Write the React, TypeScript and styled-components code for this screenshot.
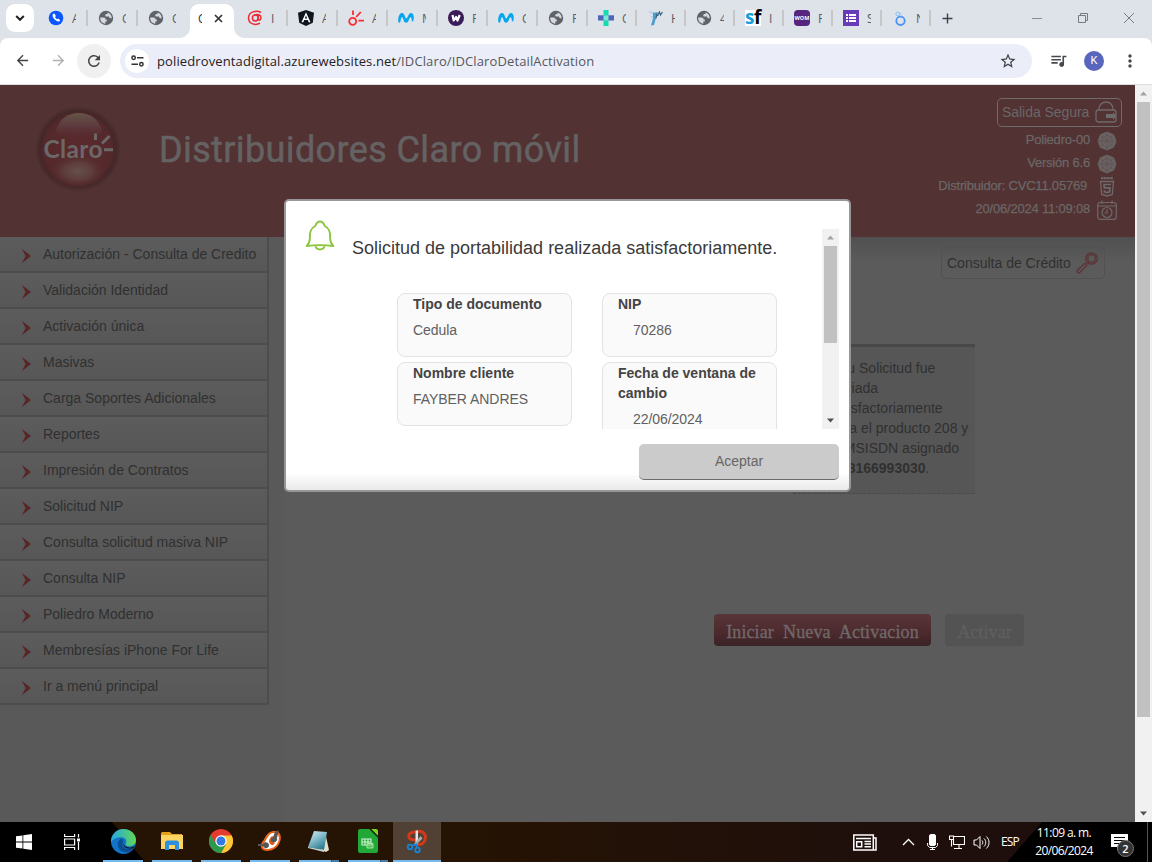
import React from "react";
import styled, { createGlobalStyle } from "styled-components";
import {
  MdQueueMusic,
  MdStarBorder,
  MdMoreVert,
  MdRefresh,
  MdArrowBack,
  MdArrowForward,
  MdAdd,
} from "react-icons/md";

const Global = createGlobalStyle`
  *, *::before, *::after { box-sizing: border-box; }
  body { margin: 0; background: #5b5b5b; font-family: "Liberation Sans", Arial, sans-serif; }
  svg { display: block; flex: none; }
`;

const uiFont = `"Open Sans", "Noto Sans", sans-serif`;

const Screen = styled.div`
  width: 1152px;
  height: 862px;
  display: flex;
  flex-direction: column;
  overflow: hidden;
`;

/* ---------- browser chrome ---------- */

const TabStrip = styled.div`
  height: 38px;
  flex: none;
  display: flex;
  background: #dee2e9;
  font: 12px ${uiFont};
  color: #5b5d60;
`;
const TabSearch = styled.button`
  width: 28px;
  height: 28px;
  margin: 4px 4px 0 6px;
  padding: 0;
  border: 0;
  border-radius: 9px;
  background: #fff;
  display: grid;
  place-items: center;
`;
const Tab = styled.div<{ $w: number; $bar?: boolean }>`
  width: ${(p) => p.$w}px;
  flex: none;
  height: 16px;
  margin-top: 10px;
  padding-left: 10px;
  display: flex;
  align-items: center;
  gap: 8px;
  border-right: 2px solid ${(p) => (p.$bar === false ? "transparent" : "#c7c7c7")};
`;
const TabLabel = styled.span`
  width: 4px;
  overflow: hidden;
  white-space: nowrap;
`;
const ActiveTab = styled.div`
  position: relative;
  width: 44px;
  height: 34px;
  margin: 4px 3px 0 2px;
  padding: 0 0 6px 8px;
  flex: none;
  display: flex;
  align-items: center;
  gap: 12px;
  color: #333;
  background: #fff;
  border-radius: 9px 9px 0 0;
  &::before,
  &::after {
    content: "";
    position: absolute;
    bottom: 0;
    width: 10px;
    height: 10px;
  }
  &::before {
    left: -10px;
    background: radial-gradient(circle at 0 0, transparent 9.5px, #fff 10px);
  }
  &::after {
    right: -10px;
    background: radial-gradient(circle at 100% 0, transparent 9.5px, #fff 10px);
  }
`;
const NewTab = styled.div`
  width: 34px;
  height: 36px;
  display: grid;
  place-items: center;
  color: #3c4043;
  margin-left: -1px;
`;
const WindowButtons = styled.div`
  margin-left: auto;
  height: 36px;
  display: flex;
  align-items: center;
  gap: 34px;
  padding-right: 17px;
`;

const ToolbarWrap = styled.div`
  height: 47px;
  flex: none;
  background: #dee2e9;
`;
const Toolbar = styled.div`
  height: 47px;
  display: flex;
  align-items: center;
  padding: 0 12px 1px 11px;
  background: #fff;
  border-bottom: 1px solid #dcdde0;
  border-radius: 8px 8px 0 0;
  color: #45484c;
`;
const NavIcon = styled.div<{ $round?: boolean; $dim?: boolean; $mr: number }>`
  width: ${(p) => (p.$round ? 34 : 22)}px;
  height: ${(p) => (p.$round ? 34 : 22)}px;
  margin-right: ${(p) => p.$mr}px;
  display: grid;
  place-items: center;
  border-radius: 50%;
  background: ${(p) => (p.$round ? "#f0f0f0" : "transparent")};
  color: ${(p) => (p.$dim ? "#b0b1b3" : "#444")};
`;
const AddressBar = styled.div`
  width: 912px;
  height: 34px;
  margin-right: 17px;
  border-radius: 17px;
  background: #ebeef8;
  display: flex;
  align-items: center;
  padding: 0 15px 0 5px;
  font: 13px/34px ${uiFont};
  color: #55585c;
  b {
    font-weight: 400;
    color: #1f2023;
  }
`;
const SiteInfo = styled.div`
  width: 24px;
  height: 24px;
  border-radius: 50%;
  background: #fff;
  display: grid;
  place-items: center;
  margin-right: 8px;
`;
const Url = styled.span`
  flex: 1;
  white-space: nowrap;
  letter-spacing: 0.12px;
`;
const Avatar = styled.div`
  width: 20px;
  height: 20px;
  margin: 0 16px 0 16px;
  border-radius: 50%;
  background: #5866bd;
  color: #fff;
  font: 11px/20px Roboto, sans-serif;
  text-align: center;
`;

/* ---------- web page ---------- */

const Viewport = styled.div`
  position: relative;
  flex: 1;
  min-height: 0;
  display: flex;
`;
const Page = styled.div`
  width: 1135px;
  display: flex;
  flex-direction: column;
  background: #5b5b5b;
`;
const Header = styled.header`
  height: 152px;
  flex: none;
  display: flex;
  background: #533233;
  padding: 13px 13px 0 34px;
`;
const SiteTitle = styled.h1`
  margin: 27px 0 0 37px;
  font: 400 36px/50px Roboto, sans-serif;
  letter-spacing: 0.38px;
  -webkit-text-stroke: 0.5px #646262;
  white-space: nowrap;
  color: #646262;
`;
const Session = styled.div`
  margin-left: auto;
  display: flex;
  flex-direction: column;
  align-items: flex-end;
  color: #6a6767;
`;
const ExitButton = styled.button`
  width: 125px;
  height: 29px;
  margin-bottom: 2px;
  padding: 0 4px 2px 4px;
  display: flex;
  align-items: center;
  justify-content: space-between;
  border: 1px solid #706a6a;
  border-radius: 5px;
  background: none;
  color: inherit;
  font: 14px "Liberation Sans", Arial, sans-serif;
  letter-spacing: -0.05px;
  white-space: nowrap;
  svg {
    margin-top: 1px;
  }
`;
const SessionRow = styled.div<{ $gap?: number }>`
  height: 23px;
  display: flex;
  align-items: center;
  gap: ${(p) => p.$gap ?? 7}px;
  padding-right: 5px;
  font-size: 13px;
  letter-spacing: -0.2px;
  -webkit-text-stroke: 0.25px #6a6767;
  span {
    margin-top: -2px;
  }
  svg {
    margin-top: 1px;
  }
`;
const Body = styled.div`
  flex: 1;
  display: flex;
  background: linear-gradient(#505050, #5b5b5b 26px);
`;
const Side = styled.nav`
  width: 284px;
  background: #595959;
`;
const Menu = styled.ul`
  width: 269px;
  margin: 0;
  padding: 0;
  list-style: none;
  border-right: 2px solid #4d4d4d;
`;
const MenuItem = styled.li`
  height: 36px;
  padding: 0 0 0 22px;
  display: flex;
  gap: 12px;
  font-size: 14px;
  line-height: 34px;
  white-space: nowrap;
  color: #303030;
  background: linear-gradient(#5c5c5c, #575757);
  border-bottom: 2px solid #4d4d4d;
  svg {
    margin-top: 12px;
  }
`;
const Main = styled.main`
  flex: 1;
  display: flex;
  flex-direction: column;
  align-items: flex-end;
  padding: 10px 30px 0 0;
`;
const CreditButton = styled.button`
  width: 164px;
  height: 32px;
  padding: 0 6px 0 5px;
  display: flex;
  align-items: center;
  justify-content: space-between;
  border: 1px solid #515151;
  border-radius: 5px;
  background: none;
  font: 14px "Liberation Sans", Arial, sans-serif;
  color: #303030;
  white-space: nowrap;
`;
const ResultBox = styled.section`
  width: 182px;
  height: 150px;
  margin: 65px 130px 0 0;
  padding: 11px 0 0 36px;
  border-top: 3px solid #484848;
  border-bottom: 1px dashed #4b4b4b;
  background: #565656;
  font-size: 14px;
  line-height: 20px;
  white-space: nowrap;
  color: #303030;
`;
const Line = styled.div<{ $indent?: number }>`
  padding-left: ${(p) => p.$indent ?? 0}px;
`;
const Actions = styled.div`
  display: flex;
  gap: 14px;
  margin: 120px 81px 0 0;
`;
const ActionButton = styled.button<{ $w: number; $off?: boolean }>`
  width: ${(p) => p.$w}px;
  height: 32px;
  padding: 5px 0 0;
  border: 0;
  border-radius: 4px;
  white-space: pre;
  font: 18px "Liberation Serif", "Times New Roman", serif;
  letter-spacing: 0.1px;
  -webkit-text-stroke: 0.3px;
  color: ${(p) => (p.$off ? "#5f5f5f" : "#6f6969")};
  background: ${(p) => (p.$off ? "#535353" : "linear-gradient(#573538, #4c292d 60%, #382325)")};
`;

/* ---------- scrollbars ---------- */

const Track = styled.div`
  width: 17px;
  flex: none;
  display: flex;
  flex-direction: column;
  align-items: center;
  background: #f1f1f1;
`;
const ArrowCell = styled.div`
  height: 17px;
  width: 17px;
  display: grid;
  place-items: center;
`;
const Thumb = styled.div<{ $h: number }>`
  width: 13px;
  height: ${(p) => p.$h}px;
  margin-bottom: auto;
  background: #c1c1c1;
`;

/* ---------- dialog ---------- */

const Dialog = styled.div`
  position: absolute;
  left: 284px;
  top: 114px;
  width: 567px;
  height: 293px;
  padding: 19px 10px 0 19px;
  border: 2px solid #979797;
  border-radius: 5px;
  background: linear-gradient(#fff 272px, #eaeaea 289px);
  display: flex;
  flex-direction: column;
`;
const DialogBody = styled.div`
  display: flex;
  height: 209px;
`;
const ScrollArea = styled.div`
  flex: 1;
  height: 200px;
  margin-top: 9px;
  margin-left: 17px;
  display: flex;
  justify-content: space-between;
  overflow: hidden;
`;
const Content = styled.div`
  width: 440px;
`;
const DialogTitle = styled.h2`
  margin: 9px 0 34px;
  font-size: 18px;
  font-weight: 400;
  line-height: 21px;
  white-space: nowrap;
  color: #3b3b3b;
`;
const Cards = styled.div`
  display: grid;
  grid-template-columns: 175px 175px;
  gap: 5px 30px;
  align-items: start;
  padding-left: 45px;
`;
const Card = styled.div`
  min-height: 64px;
  padding: 0 15px 10px;
  border: 1px solid #e3e3e3;
  border-radius: 8px;
  background: #fafafa;
  font-size: 14px;
  line-height: 20px;
  color: #606060;
`;
const CardLabel = styled.div`
  font-weight: 700;
  color: #444;
  white-space: pre-line;
`;
const CardValue = styled.div<{ $indent?: boolean }>`
  margin-top: 6px;
  padding-left: ${(p) => (p.$indent ? 15 : 0)}px;
  white-space: nowrap;
  letter-spacing: -0.05px;
`;
const AcceptButton = styled.button`
  align-self: flex-end;
  width: 200px;
  height: 36px;
  margin-top: 15px;
  padding: 0 0 2px;
  border: 0;
  border-bottom: 1px solid #6b6b6b;
  border-radius: 5px;
  background: #cbcbcb;
  font: 14px "Liberation Sans", Arial, sans-serif;
  color: #666;
`;

/* ---------- taskbar ---------- */

const Taskbar = styled.footer`
  position: relative;
  height: 40px;
  flex: none;
  display: flex;
  background: #000;
  color: #fff;
  &::before {
    content: "";
    position: absolute;
    inset: 0;
    background: linear-gradient(90deg, #251303, #251303 450px, #1f0f0c 900px);
    clip-path: polygon(112px 0, 1042px 0, 1007px 100%, 145px 100%);
  }
  > * {
    position: relative;
  }
`;
const SysButton = styled.div`
  width: 48px;
  display: grid;
  place-items: center;
`;
const Apps = styled.div`
  display: flex;
  gap: 9px;
  margin-left: 7px;
`;
const AppButton = styled.div<{ $stacked?: boolean }>`
  width: 40px;
  display: grid;
  place-items: center;
  border-bottom: 2px solid #76b9ed;
  border-image: ${(p) =>
    p.$stacked ? "linear-gradient(90deg, #76b9ed 31px, #30506b 31px, #4d7ba0 32px) 2" : "none"};
`;
const ActiveApp = styled.div`
  width: 48px;
  margin-left: -4px;
  display: grid;
  place-items: center;
  background: #504134;
  border-bottom: 2px solid #76b9ed;
`;
const Tray = styled.div`
  margin-left: auto;
  display: flex;
  align-items: center;
  font: 12px/18px ${uiFont};
  white-space: nowrap;
`;
const TrayItem = styled.div<{ $mr: number }>`
  margin-right: ${(p) => p.$mr}px;
`;
const Lang = styled.div`
  width: 20px;
  letter-spacing: -0.9px;
`;
const Clock = styled.div`
  width: 60px;
  margin: 0 17px 0 13px;
  text-align: center;
  letter-spacing: -0.6px;
`;
const Notice = styled.div`
  position: relative;
  width: 24px;
  height: 20px;
`;
const Count = styled.span`
  position: absolute;
  left: 6px;
  top: 8px;
  width: 17px;
  height: 17px;
  border: 1px solid #777;
  border-radius: 50%;
  background: #333;
  font: 600 11px/15px ${uiFont};
  text-align: center;
`;
const ShowDesktop = styled.div`
  height: 40px;
  margin-left: 12px;
  width: 5px;
  border-left: 1px solid #555;
`;

/* ---------- drawings ---------- */

const CaretDown = () => (
  <svg width="10" height="8" viewBox="0 0 10 8" fill="none" stroke="#202124" strokeWidth="2">
    <path d="M1.200 2L5 5.800 8.800 2" />
  </svg>
);
const CloseTab = () => (
  <svg width="9" height="9" viewBox="0 0 9 9" stroke="#333" strokeWidth="1.700">
    <path d="M1 1l7 7M8 1L1 8" />
  </svg>
);
const Globe = () => (
  <svg width="16" height="16" viewBox="0 0 16 16">
    <circle cx="8" cy="8" r="7.200" fill="#5f6368" />
    <path
      d="M2.200 7.600h3.300c1.700 0 2 .7 2 1.900h1.300v1.900H7.300v2.300C4 13.500 1.900 10.800 2.200 7.600zM9.600 2.400c2.600.8 4.300 3 4.100 5.900h-1.300c-1 0-1.300-.7-1.300-1.700H8.300c-1.200 0-1.500-2.500 0-2.700h1.300z"
      fill="#d5d9df"
    />
  </svg>
);
const Phone = () => (
  <svg width="16" height="16" viewBox="0 0 16 16">
    <circle cx="8" cy="8" r="7.300" fill="#0b57ff" />
    <path d="M5.200 3.700c-1 1-.9 3 1 5.300 1.900 2.100 4 3 5.300 2.200l.7-.8-1.900-1.900-1 .7c-.9-.3-1.900-1.400-2.200-2.300l.8-.9-1.500-2.500z" fill="#fff" />
  </svg>
);
const ClaroAt = () => (
  <svg width="16" height="16" viewBox="0 0 16 16" fill="none" stroke="#ea2b38" strokeWidth="1.500">
    <path d="M14 2.500C10 0 1.500 1.500 1.500 8S9 15.500 13 13.200" />
    <circle cx="8.300" cy="8" r="2.900" />
    <path d="M11.300 5v4.300c.5 1.500 2.700.8 2.700-1.600 0-3-3.500-4-6.500-2.700" />
  </svg>
);
const Angular = () => (
  <svg width="16" height="16" viewBox="0 0 16 16">
    <path d="M8 0l8 2.700-1.200 10L8 16l-6.800-3.300L0 2.700z" fill="#0e1720" />
    <path d="M8 2.300L3.500 12.300h1.800l.9-2.200h3.600l.9 2.200h1.800zM8 5.500l1.200 3.100H6.800z" fill="#fff" fillRule="evenodd" />
  </svg>
);
const ClaroMark = () => (
  <svg width="16" height="16" viewBox="0 0 16 16" fill="none" stroke="#fb2b30" strokeWidth="1.800">
    <circle cx="4.700" cy="11.300" r="3.500" />
    <path d="M5 .5v4.500M8.200 7l4.600-5M10.500 10.700H16" />
  </svg>
);
const Movistar = () => (
  <svg width="16" height="16" viewBox="0 0 16 16">
    <path d="M.2 10.500C.3 5.500 2 3 4 3c2.700 0 3 5.500 4.300 5.500S10.500 3 13 3c1.800 0 2.700 1.800 2.800 4.500 0 2.500-.6 4-1.200 4-1.200 0-.5-4.300-2-4.300-1.700 0-1.500 5.500-4.500 5.500C5.300 12.700 5.500 7.200 4 7.200c-1.500 0-1 5.500-2.500 5.500-.8 0-1.300-.7-1.300-2.200z" fill="#05a6ee" />
  </svg>
);
const WomRound = () => (
  <svg width="16" height="16" viewBox="0 0 16 16">
    <circle cx="8" cy="8" r="8" fill="#3a1d57" />
    <path d="M4.500 5l1.200 5.500L8 7l1.500 3.500L11.700 5" fill="none" stroke="#fff" strokeWidth="2.200" strokeLinejoin="round" />
  </svg>
);
const Cross = () => (
  <svg width="16" height="16" viewBox="0 0 16 16">
    <path d="M5.500 0h5v16h-5z" fill="#14dcae" />
    <path d="M0 5.300h16v5.200H0z" fill="#4d66b5" />
    <path d="M5.500 5.300h5v5.200h-5z" fill="#79ead6" />
  </svg>
);
const BlueFigure = () => (
  <svg width="16" height="16" viewBox="0 0 16 16">
    <path d="M1 1l7 1-1 3-4-2zM2 5l5 2-1 2z" fill="#b3d4e5" />
    <path d="M6 3l5-1-2 6-2 7-3 .5 2-7z" fill="#4e9dcb" />
    <path d="M10.500 6l2-4 1 3 2-3M10 3.500l-1 5" fill="none" stroke="#35617f" strokeWidth="1.200" />
  </svg>
);
const SfBox = styled.span`
  width: 16px;
  height: 16px;
  background: #fff;
  color: #000;
  font: 700 19px/15px "Open Sans", sans-serif;
  letter-spacing: -0.5px;
  white-space: nowrap;
  i {
    font-style: normal;
    color: #129fdc;
  }
`;
const WomSquare = styled.span`
  width: 16px;
  height: 16px;
  border-radius: 4px;
  background: #56257e;
  color: #fff;
  font: 700 5.500px/16px "Open Sans", sans-serif;
  text-align: center;
`;
const FormIcon = () => (
  <svg width="16" height="16" viewBox="0 0 16 16">
    <path d="M0 0h16v16H0z" fill="#673ab7" />
    <path d="M3 4h2v2H3zM6 4h7v2H6zM3 7h2v2H3zM6 7h7v2H6zM3 10h2v2H3zM6 10h7v2H6z" fill="#fff" />
  </svg>
);
const Rings = () => (
  <svg width="16" height="16" viewBox="0 0 16 16" fill="none" stroke="#4b92f5">
    <circle cx="8.500" cy="10.800" r="4.200" strokeWidth="1.800" />
    <circle cx="5.800" cy="4" r="1.900" stroke="#89bdf8" />
    <path d="M7.500 2.300c1.500.5 2 2 1.500 4" stroke="#a9d0fa" />
  </svg>
);

const Arrow = ({ up, dim }: { up?: boolean; dim?: boolean }) => (
  <svg width="7" height="5" viewBox="0 0 7 5">
    <path d={up ? "M0 4.500L3.500 .5 7 4.500z" : "M0 .5L3.500 4.500 7 .5z"} fill={dim ? "#a3a3a3" : "#505050"} />
  </svg>
);

const LogoSvg = styled.svg`
  margin-top: 7px;
`;
const ClaroLogo = () => (
  <LogoSvg width="88" height="88" viewBox="0 0 88 88">
    <defs>
      <radialGradient id="halo">
        <stop offset=".88" stopColor="#432829" />
        <stop offset="1" stopColor="#533233" />
      </radialGradient>
      <radialGradient id="ball">
        <stop offset="0" stopColor="#59292d" />
        <stop offset=".85" stopColor="#55292c" />
        <stop offset="1" stopColor="#452628" />
      </radialGradient>
      <linearGradient id="shine" x2="0" y2="1">
        <stop offset="0" stopColor="#655448" />
        <stop offset=".45" stopColor="#5d3b3e" />
        <stop offset="1" stopColor="#5a292d" stopOpacity="0" />
      </linearGradient>
      <radialGradient id="glow">
        <stop offset="0" stopColor="#65504c" />
        <stop offset=".5" stopColor="#5e3d3b" />
        <stop offset="1" stopColor="#562b2c" stopOpacity="0" />
      </radialGradient>
    </defs>
    <circle cx="44" cy="44" r="43" fill="url(#halo)" />
    <circle cx="44" cy="44" r="38.500" fill="url(#ball)" />
    <path d="M22 26C25 14 34 8 45 8s20 6 23 18c-3 6-11 10-23 10s-20-4-23-10z" fill="url(#shine)" />
    <ellipse cx="44" cy="66" rx="28" ry="17" fill="url(#glow)" />
    <text x="9.500" y="52.500" fontFamily="Lato, sans-serif" fontWeight="700" fontSize="24.500" textLength="59" fill="#6c6868">
      Claro
    </text>
    <path d="M61.500 28.500v6.500M68 38.500l7.500-7.500M70 44.700h9" stroke="#6c6868" strokeWidth="3" />
  </LogoSvg>
);
const Lock = () => (
  <svg width="22" height="22" viewBox="0 0 22 22" fill="none" stroke="#6f6a6a" strokeWidth="1.300">
    <rect x="1" y="9" width="20" height="12" rx="2.500" />
    <path d="M4 9V8a7 7 0 0 1 14 0v1" />
    <path d="M11 13h7v-2l3.500 4-3.500 4v-2h-7z" fill="#6f6a6a" stroke="none" />
  </svg>
);
const Poly = () => (
  <svg width="20" height="20" viewBox="0 0 20 20">
    <path d="M10 .5l7 3 2.500 6.500L17 16.500l-7 3-7-3L.5 10 3 3.500z" fill="#696363" />
    <path d="M10 .5v19M.5 10h19M3 3.500l14 13M17 3.500l-14 13M5 7l5-3 5 3v6l-5 4-5-4z" stroke="#5e4d4d" strokeWidth=".6" fill="none" />
  </svg>
);
const Html5 = () => (
  <svg width="20" height="20" viewBox="0 0 20 20" fill="none" stroke="#6f6868">
    <path d="M4 1.200h12" strokeWidth="2.200" strokeDasharray="2.500 .6" />
    <path d="M3.500 4.500h13l-1.200 13L10 19l-5.300-1.500z" strokeWidth="1.300" />
    <path d="M14 7.500H7l.3 3.300h5.700l-.4 4-2.600.8-2.600-.8-.1-1.500" strokeWidth="1.700" />
  </svg>
);
const CalendarClock = () => (
  <svg width="20" height="20" viewBox="0 0 20 20" fill="none" stroke="#6f6868" strokeWidth="1.200">
    <rect x=".7" y="2.500" width="18.600" height="16.800" rx="2.500" />
    <path d="M1 6h18M5 .5V4M15 .5V4" />
    <circle cx="10" cy="12.500" r="5" />
    <path d="M10 9.500v3.500H7.700" />
  </svg>
);
const Magnifier = () => (
  <svg width="22" height="22" viewBox="0 0 22 22" fill="none" stroke="#5c3236" strokeWidth="1.300">
    <circle cx="15.500" cy="6.500" r="5.700" />
    <circle cx="15.500" cy="6.500" r="3.800" />
    <path d="M9 11.200l2 2-7.500 7.500c-1.400.8-3-.7-2.200-2.200zM11 11.500l1-1" />
  </svg>
);
const Chevron = () => (
  <svg width="9" height="14" viewBox="0 0 9 14">
    <path d="M0 0l9 7-9 7 3.500-7z" fill="#5a2526" />
  </svg>
);
const Bell = () => (
  <svg width="30" height="31" viewBox="0 0 30 31" fill="none" stroke="#8cc63f" strokeWidth="1.900" strokeLinejoin="round">
    <path d="M1.700 26c2.500-2.500 3.200-4.500 3.200-8-.8-6.500 1.500-10 5.500-12.300C11.300 3 12.500 1.500 15 1.500s3.700 1.500 4.600 4.200c4 2.300 6.300 5.800 5.500 12.300 0 3.500.7 5.500 3.200 8-8-1-18.600-1-26.600 0z" />
    <path d="M10.500 26.200c.7 4.300 8.300 4.300 9 0" />
  </svg>
);

const WindowsIcon = () => (
  <svg width="16" height="16" viewBox="0 0 16 16" fill="#fff">
    <path d="M0 2.300L6.500 1.400v6.200H0zM7.300 1.300L16 0v7.600H7.300zM0 8.400h6.500v6.200L0 13.700zM7.300 8.400H16V16l-8.700-1.300z" />
  </svg>
);
const TaskView = () => (
  <svg width="16" height="16" viewBox="0 0 16 16" fill="none" stroke="#fff" strokeWidth="1.200">
    <path d="M.6 0v2.500h10V0M.6 16v-2.500h10V16M.6 5h10v6H.6zM14.500 0v3.500M14.500 8v8" />
    <path d="M13 4.500h3v3h-3z" fill="#fff" stroke="none" />
  </svg>
);
const Edge = () => (
  <svg width="25" height="25" viewBox="0 0 24 24">
    <defs>
      <linearGradient id="edgeTop">
        <stop offset="0" stopColor="#27a9e1" />
        <stop offset="1" stopColor="#5fd655" />
      </linearGradient>
    </defs>
    <circle cx="12" cy="12" r="12" fill="#1174ca" />
    <path d="M0 11C1 4 6 0 12 0c7 0 12 5 12 10.500 0 4-3 6-6.500 6-3 0-4-1.200-3.500-2 1.800-2.500.5-6.500-4-6.500C5 8 1.500 10 0 13z" fill="url(#edgeTop)" />
    <path d="M9 9.500c-4 3-3.500 11 4 12.800 4 .5 7-1 9-4.300-4 2-8 1.500-10-1-1.500-2-1.500-4 0-6-1-1.500-2-1.800-3-1.500z" fill="#0c4d92" />
    <path d="M12.500 11c-1.500 3 .5 6.500 4.500 6.800 2.500.2 4.500-.6 6-2-1 3-2.500 3-5 3-4.500.3-7.500-3-5.500-7.800z" fill="#120d0a" />
  </svg>
);
const Folder = () => (
  <svg width="22" height="20" viewBox="0 0 22 20">
    <path d="M0 2l1-1h8l2 2h10v6H0z" fill="#e2a01b" />
    <path d="M0 4h22v14H0z" fill="#fcd462" />
    <path d="M4 19v-8l2-1.500h10l2 1.500v8h-4v-5H8v5z" fill="#2d8fdd" />
  </svg>
);
const Chrome = () => (
  <svg width="24" height="24" viewBox="0 0 24 24">
    <circle cx="12" cy="12" r="12" fill="#e33b2e" />
    <path d="M12 6.500h10.700A12 12 0 0 1 12 24l5-9z" fill="#fcc934" />
    <path d="M12 24l5-9-5 2-5-2L1.600 6A12 12 0 0 0 12 24z" fill="#2a9b4b" />
    <circle cx="12" cy="12" r="5.700" fill="#fff" />
    <circle cx="12" cy="12" r="4.500" fill="#3478e5" />
  </svg>
);
const OrangeTool = () => (
  <svg width="24" height="22" viewBox="0 0 24 22">
    <path d="M4 12C7 9 8 2 15 1c8-1 9 6 7 11-2 6-8 9-13 9-5 0-8-4-5-9z" fill="#e8651c" />
    <path d="M6 13c3-3 4-9 9-10 6-1 7 5 5 9-2 5-7 7-11 7-4 0-5-3-3-6z" fill="#fff" />
    <path d="M11 12c0-3 2-6 4-6l-1 5 3 2c-2 3-4 3-6-1z" fill="#d95d1c" />
    <path d="M17 2l4-2-2 8c1 3-2 5-5 4-2-1-1-4 1-5zM0 14l5 0c1-3 6-2 6 1 0 4-5 4-6 1l-5 0z" fill="#54565a" />
  </svg>
);
const Notepad = () => (
  <svg width="24" height="23" viewBox="0 0 24 23">
    <defs>
      <linearGradient id="pad" x2=".6" y2="1">
        <stop offset="0" stopColor="#d5eef4" />
        <stop offset=".5" stopColor="#85bccb" />
        <stop offset="1" stopColor="#2b7b91" />
      </linearGradient>
    </defs>
    <path d="M18 2l4 18-3 2-5-2z" fill="#e3dfca" />
    <path d="M7 1l13 1-3 18L1 17z" fill="url(#pad)" />
    <path d="M1 17l16 3v2L1 18z" fill="#c9d6d8" />
  </svg>
);
const Calc = () => (
  <svg width="20" height="24" viewBox="0 0 20 24">
    <path d="M2 0h10l8 8v14a2 2 0 0 1-2 2H2a2 2 0 0 1-2-2V2a2 2 0 0 1 2-2z" fill="#21a836" />
    <path d="M13 0h5a2 2 0 0 1 2 2v5z" fill="#7ed321" />
    <path d="M12 0l8 8" stroke="#0a3211" strokeWidth="1.500" />
    <path d="M4 10h9v6H4zM4 13h9M7 10v6M10 10v6" fill="none" stroke="#d8f3d8" strokeWidth="1.100" />
    <path d="M9 14.500h6v4.500H9zM9 16h6" fill="#4dbf55" stroke="#b2e8b2" strokeWidth=".9" />
  </svg>
);
const Snip = () => (
  <svg width="22" height="25" viewBox="0 0 22 25">
    <path d="M9 3C5 3 2 5 3 8.500c1 2 4 2.500 7 2.500M11 2.500c5-1 8.500 1.500 8.500 6S16 16 12 15.500" fill="none" stroke="#d2391a" strokeWidth="3" />
    <path d="M9.500 1.500h2.500v14h-2.500z" fill="#e5e5e5" />
    <path d="M14.500 7l2 2.500-7 7-2-1z" fill="#aaa" />
    <circle cx="4" cy="18" r="2.300" fill="none" stroke="#1685d8" strokeWidth="1.800" />
    <circle cx="11.500" cy="21" r="2.300" fill="none" stroke="#1685d8" strokeWidth="1.800" />
    <path d="M6 17l4.500-2 .5 4" fill="none" stroke="#1685d8" strokeWidth="1.800" />
  </svg>
);
const News = () => (
  <svg width="24" height="17" viewBox="0 0 24 17" fill="none" stroke="#fff" strokeWidth="1.500">
    <path d="M.8 1h19.500v15H.8zM20.500 4H23v12h-3" />
    <path d="M3 4.500h15M11.500 7.500H18M11.500 10H18M11.500 12.800H18M3.700 7.700h5v5h-5z" />
  </svg>
);
const Up = () => (
  <svg width="13" height="8" viewBox="0 0 13 8" fill="none" stroke="#fff" strokeWidth="1.300">
    <path d="M1 7l5.500-5.500L12 7" />
  </svg>
);
const Mic = () => (
  <svg width="11" height="16" viewBox="0 0 11 16" fill="none" stroke="#fff">
    <rect x="2.500" y=".5" width="6" height="11" rx="1.500" fill="#fff" />
    <path d="M.6 9v2.500l2 2h6l2-2V9M5.500 13.500V16M3 15.500h5" />
  </svg>
);
const Monitor = () => (
  <svg width="16" height="15" viewBox="0 0 16 15" fill="none" stroke="#fff" strokeWidth="1.100">
    <path d="M5 1.500h10.500v8H4.500V5M.5 1h4v3.500h-4zM2.500 4.500v7M10 9.500v3.500M5 13.500h8" />
  </svg>
);
const Volume = () => (
  <svg width="17" height="15" viewBox="0 0 17 15" fill="none" stroke="#fff">
    <path d="M1 5h2.500L7 1.500v12L3.500 10H1zM9 5.500c1 1 1 3 0 4M11 3.500c2.300 2 2.300 6 0 8M13.300 1.500c3.600 3 3.600 9 0 12" />
  </svg>
);

/* ---------- data ---------- */

type TabInfo = { label: string; icon: React.ReactNode; w: number; bar?: boolean };

const leftTabs: TabInfo[] = [
  { label: "A", icon: <Phone />, w: 50 },
  { label: "C", icon: <Globe />, w: 50 },
  { label: "C", icon: <Globe />, w: 50, bar: false },
];
const rightTabs: TabInfo[] = [
  { label: "I", icon: <ClaroAt />, w: 51 },
  { label: "A", icon: <Angular />, w: 50 },
  { label: "A", icon: <ClaroMark />, w: 50 },
  { label: "M", icon: <Movistar />, w: 50 },
  { label: "P", icon: <WomRound />, w: 50 },
  { label: "C", icon: <Movistar />, w: 50 },
  { label: "P", icon: <Globe />, w: 50 },
  { label: "C", icon: <Cross />, w: 49 },
  { label: "H", icon: <BlueFigure />, w: 49 },
  { label: "4", icon: <Globe />, w: 49 },
  { label: "I", icon: <SfBox><i>s</i>f</SfBox>, w: 49 },
  { label: "P", icon: <WomSquare>WOM</WomSquare>, w: 49 },
  { label: "S", icon: <FormIcon />, w: 49 },
  { label: "N", icon: <Rings />, w: 49 },
];
const menu = [
  "Autorización - Consulta de Credito",
  "Validación Identidad",
  "Activación única",
  "Masivas",
  "Carga Soportes Adicionales",
  "Reportes",
  "Impresión de Contratos",
  "Solicitud NIP",
  "Consulta solicitud masiva NIP",
  "Consulta NIP",
  "Poliedro Moderno",
  "Membresías iPhone For Life",
  "Ir a menú principal",
];
const cards = [
  { label: "Tipo de documento", value: "Cedula" },
  { label: "NIP", value: "70286", indent: true },
  { label: "Nombre cliente", value: "FAYBER ANDRES" },
  { label: "Fecha de ventana de\ncambio", value: "22/06/2024", indent: true },
];

const Tabs = ({ items }: { items: TabInfo[] }) => (
  <>
    {items.map((t, i) => (
      <Tab key={i} $w={t.w} $bar={t.bar}>
        {t.icon}
        <TabLabel>{t.label}</TabLabel>
      </Tab>
    ))}
  </>
);

export default function App() {
  return (
    <Screen>
      <Global />
      <TabStrip>
        <TabSearch>
          <CaretDown />
        </TabSearch>
        <Tabs items={leftTabs} />
        <ActiveTab>
          <TabLabel>C</TabLabel>
          <CloseTab />
        </ActiveTab>
        <Tabs items={rightTabs} />
        <NewTab>
          <MdAdd size={17} />
        </NewTab>
        <WindowButtons>
          <svg width="12" height="12" viewBox="0 0 12 12" stroke="#8a8d91">
            <path d="M1 6.500h10" />
          </svg>
          <svg width="12" height="12" viewBox="0 0 12 12" stroke="#777a7e" fill="none">
            <path d="M1.500 3.500h7v7h-7zM3.500 3.500v-2h7v7h-2" />
          </svg>
          <svg width="12" height="12" viewBox="0 0 12 12" stroke="#777a7e">
            <path d="M1 1l10 10M11 1L1 11" />
          </svg>
        </WindowButtons>
      </TabStrip>
      <ToolbarWrap>
        <Toolbar>
          <NavIcon $mr={14}>
            <MdArrowBack size={17} />
          </NavIcon>
          <NavIcon $dim $mr={8}>
            <MdArrowForward size={17} />
          </NavIcon>
          <NavIcon $round $mr={9}>
            <MdRefresh size={18} />
          </NavIcon>
          <AddressBar>
            <SiteInfo>
              <svg width="13" height="12" viewBox="0 0 13 12" fill="none" stroke="#333" strokeWidth="1.500">
                <circle cx="2.600" cy="2.800" r="1.700" />
                <path d="M6 2.800h6.500M.5 9.200H7" />
                <circle cx="10.400" cy="9.200" r="1.700" />
              </svg>
            </SiteInfo>
            <Url>
              <b>poliedroventadigital.azurewebsites.net</b>/IDClaro/IDClaroDetailActivation
            </Url>
            <MdStarBorder size={18} color="#3c4043" />
          </AddressBar>
          <MdQueueMusic size={19} />
          <Avatar>K</Avatar>
          <MdMoreVert size={20} />
        </Toolbar>
      </ToolbarWrap>

      <Viewport>
        <Page>
          <Header>
            <ClaroLogo />
            <SiteTitle>Distribuidores Claro móvil</SiteTitle>
            <Session>
              <ExitButton>
                Salida Segura
                <Lock />
              </ExitButton>
              <SessionRow>
                <span>Poliedro-00</span>
                <Poly />
              </SessionRow>
              <SessionRow>
                <span>Versión 6.6</span>
                <Poly />
              </SessionRow>
              <SessionRow $gap={10}>
                <span>Distribuidor: CVC11.05769</span>
                <Html5 />
              </SessionRow>
              <SessionRow>
                <span>20/06/2024 11:09:08</span>
                <CalendarClock />
              </SessionRow>
            </Session>
          </Header>
          <Body>
            <Side>
              <Menu>
                {menu.map((m) => (
                  <MenuItem key={m}>
                    <Chevron />
                    {m}
                  </MenuItem>
                ))}
              </Menu>
            </Side>
            <Main>
              <CreditButton>
                Consulta de Crédito
                <Magnifier />
              </CreditButton>
              <ResultBox>
                <Line $indent={9}>Su Solicitud fue</Line>
                <Line>enviada</Line>
                <Line>satisfactoriamente</Line>
                <Line>para el producto 208 y</Line>
                <Line>el MSISDN asignado</Line>
                <Line>
                  es <b>3166993030</b>.
                </Line>
              </ResultBox>
              <Actions>
                <ActionButton $w={217}>{"Iniciar  Nueva  Activacion"}</ActionButton>
                <ActionButton $w={79} $off>
                  Activar
                </ActionButton>
              </Actions>
            </Main>
          </Body>
        </Page>
        <Track>
          <ArrowCell>
            <Arrow up dim />
          </ArrowCell>
          <Thumb $h={615} />
          <ArrowCell>
            <Arrow />
          </ArrowCell>
        </Track>

        <Dialog>
          <DialogBody>
            <Bell />
            <ScrollArea>
              <Content>
                <DialogTitle>Solicitud de portabilidad realizada satisfactoriamente.</DialogTitle>
                <Cards>
                  {cards.map((c) => (
                    <Card key={c.label}>
                      <CardLabel>{c.label}</CardLabel>
                      <CardValue $indent={c.indent}>{c.value}</CardValue>
                    </Card>
                  ))}
                </Cards>
              </Content>
              <Track>
                <ArrowCell>
                  <Arrow up dim />
                </ArrowCell>
                <Thumb $h={97} />
                <ArrowCell>
                  <Arrow />
                </ArrowCell>
              </Track>
            </ScrollArea>
          </DialogBody>
          <AcceptButton>Aceptar</AcceptButton>
        </Dialog>
      </Viewport>

      <Taskbar>
        <SysButton>
          <WindowsIcon />
        </SysButton>
        <SysButton>
          <TaskView />
        </SysButton>
        <Apps>
          <AppButton>
            <Edge />
          </AppButton>
          <AppButton>
            <Folder />
          </AppButton>
          <AppButton>
            <Chrome />
          </AppButton>
          <AppButton>
            <OrangeTool />
          </AppButton>
          <AppButton $stacked>
            <Notepad />
          </AppButton>
          <AppButton $stacked>
            <Calc />
          </AppButton>
          <ActiveApp>
            <Snip />
          </ActiveApp>
        </Apps>
        <Tray>
          <TrayItem $mr={25}>
            <News />
          </TrayItem>
          <TrayItem $mr={12}>
            <Up />
          </TrayItem>
          <TrayItem $mr={11}>
            <Mic />
          </TrayItem>
          <TrayItem $mr={8}>
            <Monitor />
          </TrayItem>
          <TrayItem $mr={11}>
            <Volume />
          </TrayItem>
          <Lang>ESP</Lang>
          <Clock>
            11:09 a. m.
            <br />
            20/06/2024
          </Clock>
          <Notice>
            <svg width="17" height="18" viewBox="0 0 17 18">
              <path d="M0 2h17v13h-8l-3 3v-3H0z" fill="#fff" />
              <path d="M3 5.500h11M3 8.500h11M3 11.500h5" stroke="#000" />
            </svg>
            <Count>2</Count>
          </Notice>
          <ShowDesktop />
        </Tray>
      </Taskbar>
    </Screen>
  );
}
